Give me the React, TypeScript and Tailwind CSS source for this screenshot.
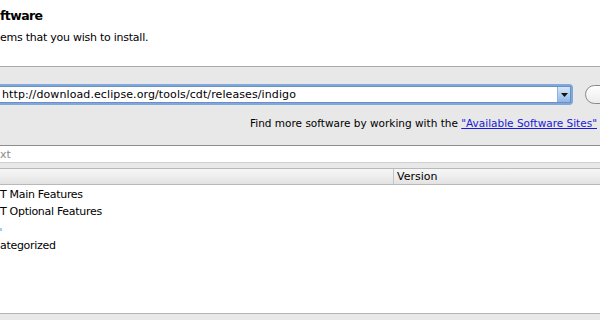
import React from "react";

export default function App() {
  return (
    <div className="w-[600px] h-[320px] overflow-hidden bg-white flex flex-col font-['DejaVu_Sans',sans-serif] text-black">
      {/* header */}
      <div className="h-[66px] shrink-0 bg-white relative">
        <div className="absolute left-0 top-[7px] text-[12.5px] font-bold leading-[18px] tracking-[-0.6px]">ftware</div>
        <div className="absolute left-0 top-[30px] text-[11px] leading-[16px] tracking-[-0.25px]">ems that you wish to install.</div>
      </div>
      <div className="h-px shrink-0 bg-[#a9a9a9]" />
      {/* gray section */}
      <div className="h-[78px] shrink-0 bg-[#e8e8e8] flex flex-col">
        <div className="flex items-center mt-[17px] h-[21px]">
          <div className="w-[573px] h-[21px] rounded-r-[4px] bg-[#7fa8dc] p-[2px] pl-0 shrink-0">
            <div className="h-full bg-white border border-l-0 border-[#6d8fbf] flex items-center">
              <span className="flex-1 pl-[2px] text-[11px] tracking-[0.1px] leading-[15px] whitespace-nowrap">http://download.eclipse.org/tools/cdt/releases/indigo</span>
              <div className="w-[13px] h-full border-l border-[#8fb1dd] bg-gradient-to-b from-[#d7e6f8] to-[#8fb6e6] flex items-center justify-center">
                <svg width="7" height="4" viewBox="0 0 7 4"><path d="M0 0h7L3.5 4z" fill="#111" /></svg>
              </div>
            </div>
          </div>
          <div className="ml-[12px] w-[40px] h-[19px] shrink-0 rounded-full border border-[#8a8a8a] bg-gradient-to-b from-white to-[#ececec]" />
        </div>
        <div className="mt-[10px] pr-[3px] text-right text-[10.5px] leading-[16px] whitespace-nowrap">
          Find more software by working with the{" "}
          <span className="text-[#1a1ad6] underline">"Available Software Sites"</span>
        </div>
      </div>
      <div className="h-px shrink-0 bg-[#8e8e8e]" />
      {/* filter field */}
      <div className="h-[16px] shrink-0 bg-white flex items-center text-[11px] text-[#8a8a8a] leading-[16px] pt-[2px]">xt</div>
      <div className="h-px shrink-0 bg-[#d0d0d0]" />
      <div className="h-[5px] shrink-0 bg-[#e8e8e8]" />
      {/* table header */}
      <div className="h-[17px] shrink-0 border-y border-[#b9b9b9] bg-gradient-to-b from-[#f6f6f6] via-[#eeeeee] to-[#e2e2e2] flex">
        <div className="w-[393px] shrink-0" />
        <div className="flex-1 border-l border-[#c4c4c4] pl-[3px] text-[11px] leading-[15px]">Version</div>
      </div>
      {/* rows */}
      <div className="flex-1 bg-white text-[11px] tracking-[-0.3px] flex flex-col pt-[2px]">
        <div className="h-[17px] flex items-center whitespace-nowrap">T Main Features</div>
        <div className="h-[17px] flex items-center whitespace-nowrap">T Optional Features</div>
        <div className="h-[17px] flex items-center">
          <div className="w-[2px] h-[3px] bg-[#9fd0f0]" />
        </div>
        <div className="h-[17px] flex items-center whitespace-nowrap">ategorized</div>
      </div>
      <div className="h-px shrink-0 bg-[#b4b4b4]" />
      <div className="h-[6px] shrink-0 bg-[#e8e8e8]" />
    </div>
  );
}
